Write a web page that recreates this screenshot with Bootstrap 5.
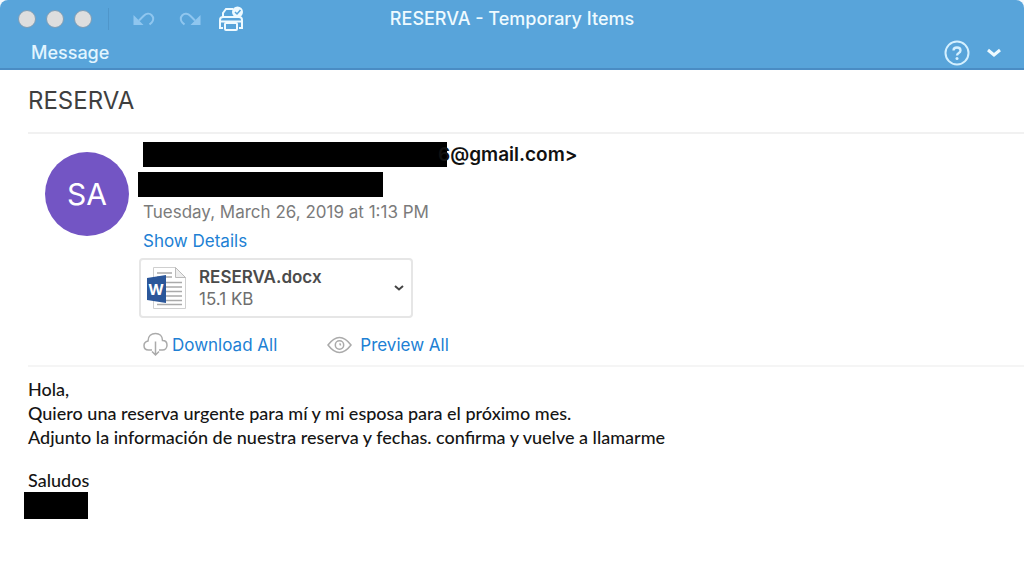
<!DOCTYPE html>
<html lang="es">
<head>
<meta charset="utf-8">
<meta name="viewport" content="width=device-width, initial-scale=1">
<title>RESERVA - Temporary Items</title>
<link href="https://cdn.jsdelivr.net/npm/bootstrap@5.3.0/dist/css/bootstrap.min.css" rel="stylesheet">
<style>
  body { font-family: Inter, Roboto, sans-serif; font-size: 17px; line-height: 24px; background: #fff; color: #111; }
  button { font: inherit; }
  svg { display: block; }
  .corners { background: #f4f9fd; }
  .titlebar { background: #58a4da; color: #eefaff; border-bottom: 2px solid #4a8cc4; border-radius: 8px 8px 0 0; }
  .title-row { display: grid; grid-template-columns: 1fr auto 1fr; height: 38px; }
  .tools { padding-left: 18px; }
  .lights { gap: 10px; }
  .light { width: 18px; height: 18px; border-radius: 50%; background: #dedede; border: 1px solid #7e9db5; }
  .divider { width: 1px; height: 22px; background: #4f96ca; }
  .faded { color: #8fc6ef; }
  .window-title { font-size: 18px; font-weight: 500; }
  .menu-row { height: 30px; padding: 0 22px 0 31px; }
  .menu-row .tab { color: #e2f5ff; font-weight: 500; font-size: 18px; text-decoration: none; }
  .subject { font-size: 24px; line-height: 32px; font-weight: 400; color: #3f3f3f; padding: 15px 0; border-bottom: 2px solid #f1f1f1; }
  .inset { margin-left: 28px; }
  .sender { padding: 8px 0 8px 17px; border-bottom: 2px solid #f5f5f5; }
  .avatar { width: 84px; height: 84px; border-radius: 50%; background: #7355c4; color: #fff; font-size: 30px; margin: 10px 9px 0 0; }
  .redacted { background: #000; height: 25px; }
  .redacted.address { width: 304px; }
  .redacted.recipient { width: 245px; margin-top: 5px; }
  .redacted.signature { width: 64px; height: 27px; margin-left: -4px; }
  .mail { font-weight: 600; font-size: 19px; color: #111; margin-left: -9px; }
  .indent { padding-left: 5px; }
  .sent { color: #7b7b7b; margin-top: 3px; }
  .details { margin-top: 5px; }
  .action { color: #2080d4; text-decoration: none; }
  .attachment { width: 274px; height: 60px; border: 2px solid #e6e6e6; border-radius: 4px; background: #fff; margin: 5px 0 0 1px; padding: 0 7px 0 6px; line-height: 22px; }
  .file-name { font-weight: 600; color: #4b4b4b; }
  .file-size { color: #6f6f6f; }
  .bulk { gap: 50px; margin-top: 14px; }
  .message { font-family: Lato, sans-serif; font-size: 18px; font-weight: 500; color: #151515; padding-top: 10px; }
  .closing { margin-top: 19px; }
</style>
</head>
<body>
<div class="corners">
<header class="titlebar">
  <div class="title-row align-items-center">
    <div class="tools d-flex align-items-center">
      <div class="lights d-flex">
        <button class="light p-0" aria-label="Close"></button>
        <button class="light p-0" aria-label="Minimize"></button>
        <button class="light p-0" aria-label="Zoom"></button>
      </div>
      <span class="divider ms-3"></span>
      <button class="btn p-0 border-0 faded ms-4" aria-label="Undo">
        <svg width="22" height="16" viewBox="0 0 22 16" fill="none" stroke="currentColor" stroke-width="2"><path d="M6 9.500L10.500 5C13 2.500 16.500 2 18.700 4.200S20.500 9.700 18.700 11.500L16.500 13.500"/><path d="M.500 4v10h10z" fill="currentColor" stroke="none"/></svg>
      </button>
      <button class="btn p-0 border-0 faded ms-4" aria-label="Redo">
        <svg width="22" height="16" viewBox="0 0 22 16" fill="none" stroke="currentColor" stroke-width="2"><path d="M16 9.500L11.500 5C9 2.500 5.500 2 3.300 4.200S1.500 9.700 3.300 11.500L5.500 13.500"/><path d="M21.500 4v10h-10z" fill="currentColor" stroke="none"/></svg>
      </button>
      <button class="btn p-0 border-0 text-white ms-3" aria-label="Print">
        <svg width="28" height="26" viewBox="0 0 28 26" fill="none" stroke="#eefaff" stroke-width="2"><path d="M6 11V7l3-4h7M6 22H3V14q0-3 3-3h16q3 0 3 3v8h-3M6 11h12M4 15.500h20"/><rect x="8" y="17" width="12" height="7" rx="1"/><circle cx="20.500" cy="6" r="5.500" fill="#eefaff" stroke="none"/><path d="M18 6l2 2 3.500-4" stroke="#58a4da" stroke-width="1.500"/></svg>
      </button>
    </div>
    <div class="window-title">RESERVA - Temporary Items</div>
    <div></div>
  </div>
  <nav class="menu-row d-flex align-items-center justify-content-between">
    <a class="tab" href="#">Message</a>
    <div class="d-flex align-items-center gap-3">
      <button class="btn p-0 border-0" aria-label="Help">
        <svg width="26" height="26" viewBox="0 0 26 26" fill="none" stroke="#d4f0ff" stroke-width="2"><circle cx="13" cy="13" r="11.500"/><path d="M9.500 10.500Q9.500 7.500 13 7.500t3.500 3q0 1.500-1.700 2.500T13 15.500" stroke-width="2.300"/><circle cx="13" cy="18.500" r="1.500" fill="#d4f0ff" stroke="none"/></svg>
      </button>
      <button class="btn p-0 border-0" aria-label="Collapse">
        <svg width="16" height="10" viewBox="0 0 16 10" fill="none" stroke="#eefaff" stroke-width="3"><path d="M2 2l6 5 6-5"/></svg>
      </button>
    </div>
  </nav>
</header>
</div>
<main>
  <h1 class="subject inset mb-0">RESERVA</h1>
  <section class="sender inset d-flex align-items-start">
    <div class="avatar d-flex align-items-center justify-content-center flex-shrink-0">SA</div>
    <div>
      <div class="indent d-flex align-items-center">
        <span class="redacted address"></span><span class="mail">6@gmail.com&gt;</span>
      </div>
      <div class="redacted recipient"></div>
      <div class="indent sent">Tuesday, March 26, 2019 at 1:13 PM</div>
      <div class="indent details"><a class="action" href="#">Show Details</a></div>
      <button class="attachment d-flex align-items-center text-start">
        <svg width="40" height="44" viewBox="0 0 40 44"><path d="M6.500 1.500h22l10 10v31h-32z" fill="#fff" stroke="#cfcfcf"/><path d="M28.500 1.500v10h10z" fill="#eee" stroke="#bbb"/><path d="M10 7h15M10 11h15M19 16.500h16M19 21h16M19 25.500h16M19 30h16M19 34.500h16M10 38.500h25" stroke="#aaa" stroke-width="1.300"/><path d="M0 12l19-3v28L0 34z" fill="#2b579a"/><text x="9" y="29" text-anchor="middle" font-family="Inter, sans-serif" font-size="15" font-weight="700" fill="#fff">W</text></svg>
        <span class="flex-grow-1 ps-2 ms-1"><span class="file-name d-block">RESERVA.docx</span><span class="file-size d-block">15.1 KB</span></span>
        <svg width="10" height="8" viewBox="0 0 10 8" fill="none" stroke="#444" stroke-width="2"><path d="M1 2l4 3.500L9 2"/></svg>
      </button>
      <div class="bulk d-flex indent">
        <a class="action d-flex align-items-center" href="#">
          <svg class="me-1" width="25" height="25" viewBox="0 0 25 25" fill="none" stroke="#aaa" stroke-width="1.500"><path d="M9 18H5.500C2.500 18 1 16 1 13.500S3 9.500 5 9C5 4 8.500 1.500 12.500 1.500S19.500 4 19.500 8.500c3 0 4.500 2 4.500 4.700S22 18 19.500 18H16M12.500 9.500v13.500M9 19.500l3.500 3.500 3.500-3.500"/></svg>Download All</a>
        <a class="action d-flex align-items-center" href="#">
          <svg class="me-2" width="25" height="18" viewBox="0 0 25 18" fill="none" stroke="#aaa" stroke-width="1.500"><path d="M1 9Q12.500-6 24 9 12.500 24 1 9z"/><circle cx="12.500" cy="9" r="4.200"/><path d="M12.500 7.500a2 2 0 0 1 1 2"/></svg>Preview All</a>
      </div>
    </div>
  </section>
  <article class="message inset">
    <p class="mb-0">Hola,<br>Quiero una reserva urgente para mí y mi esposa para el próximo mes.<br>Adjunto la información de nuestra reserva y fechas. confirma y vuelve a llamarme</p>
    <p class="mb-0 closing">Saludos</p>
    <div class="redacted signature"></div>
  </article>
</main>
<script src="https://cdn.jsdelivr.net/npm/bootstrap@5.3.0/dist/js/bootstrap.bundle.min.js"></script>
</body>
</html>
